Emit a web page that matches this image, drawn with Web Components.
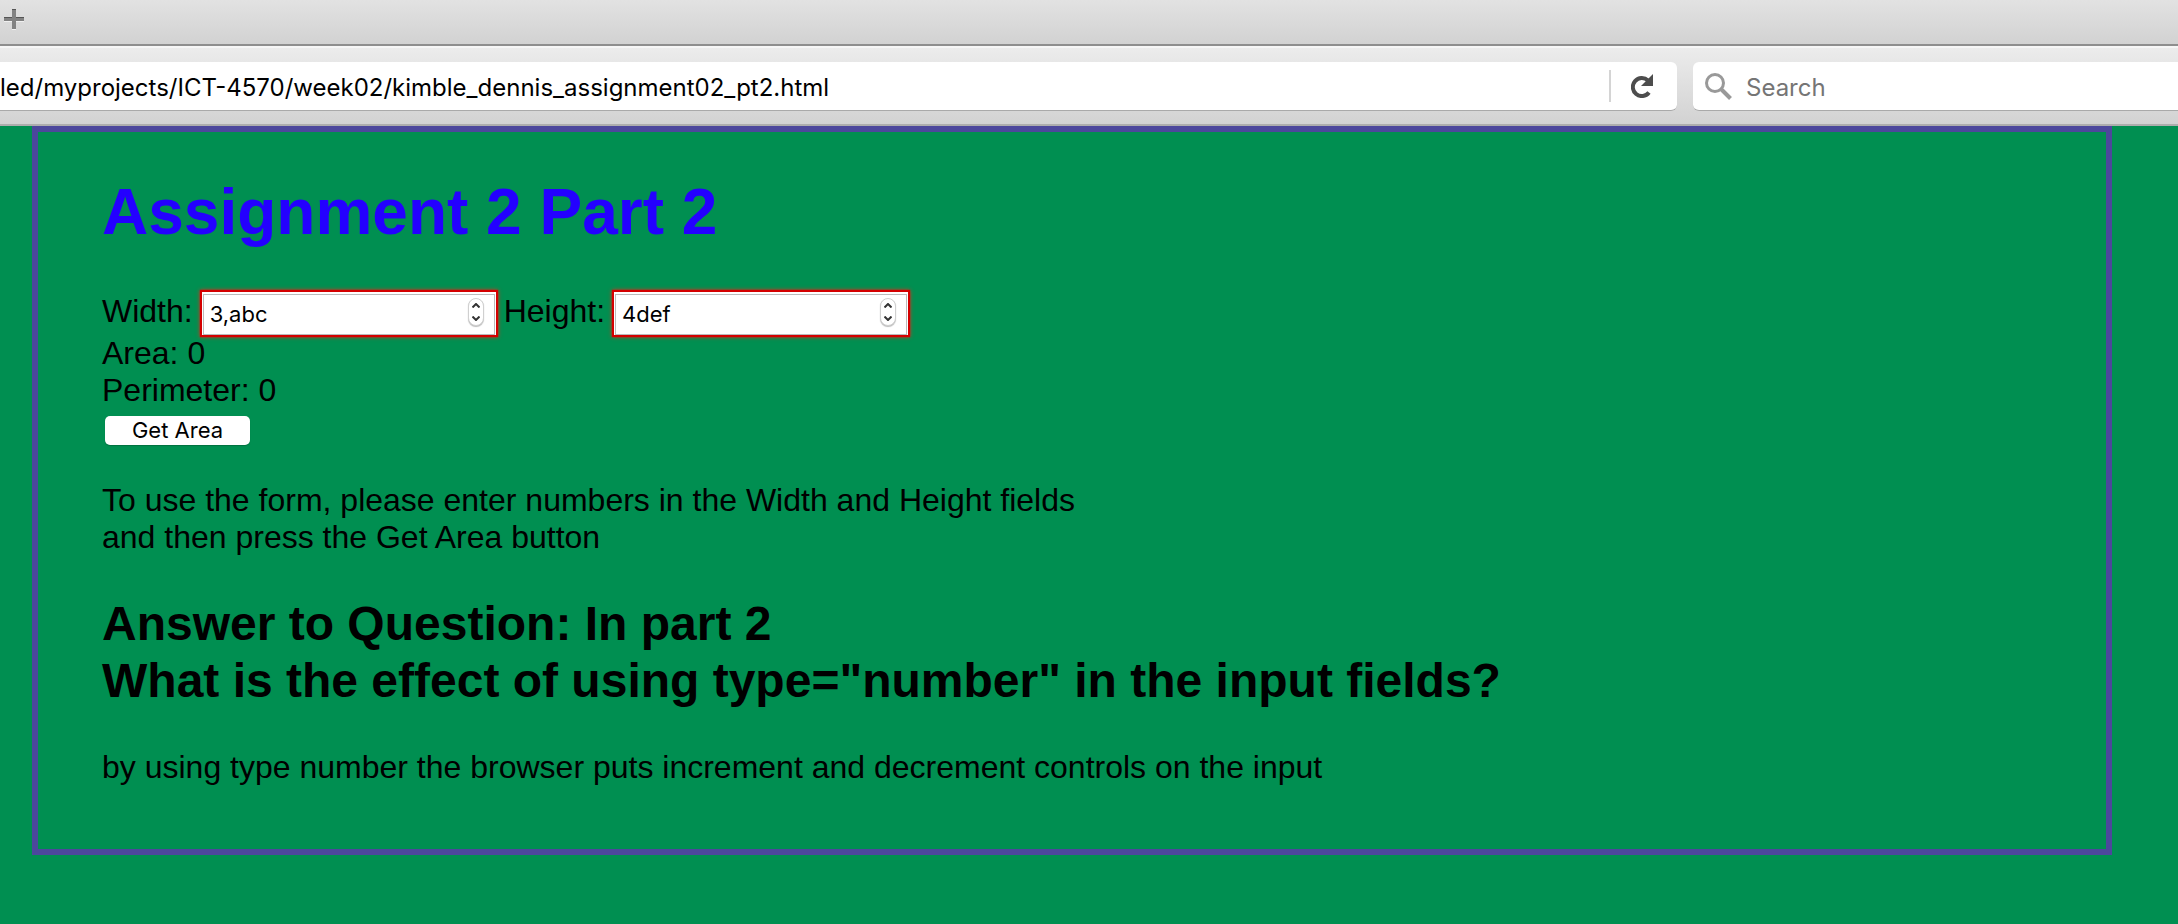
<!DOCTYPE html>
<html lang="en">
<head>
<meta charset="utf-8">
<title>Assignment 2 Part 2</title>
<style>
html{background:#008f51}
body{margin:0;font-family:"Liberation Sans",Arial,sans-serif;font-size:32px;line-height:37px;color:#000}
</style>
</head>
<body>
<browser-chrome></browser-chrome>
<main>
<assignment-panel>
  <span slot="title">Assignment 2 Part 2</span>
  <area-form></area-form>
  <qa-block>
    <span slot="question">Answer to Question: In part 2<br>What is the effect of using type="number" in the input fields?</span>
    <span slot="answer">by using type number the browser puts increment and decrement controls on the input</span>
  </qa-block>
</assignment-panel>
</main>
<script>
const define = (name, html, setup) => customElements.define(name, class extends HTMLElement {
  constructor() {
    super();
    this.attachShadow({ mode: 'open' });
  }
  connectedCallback() {
    this.shadowRoot.innerHTML = html;
    if (setup) setup(this, this.shadowRoot);
  }
});

define('tab-strip', `
<style>
:host{display:flex;align-items:flex-start;height:35px;padding:9px 4px 0;background:linear-gradient(#e2e2e2,#d2d2d2);border-bottom:2px solid #8e8e8e}
button{border:0;background:none;padding:0;width:20px;height:20px}
svg{display:block}
</style>
<button aria-label="New tab"><svg width="20" height="21" viewBox="0 0 20 21">
<path d="M8 1h4v8h8v4h-8v8H8v-8H0V9h8z" fill="#f0f0f0"/>
<path d="M8 0h4v8h8v4h-8v8H8v-8H0V8h8z" fill="#828282"/>
<path d="M8 0h4v1H8zM0 8h8v1H0zM12 8h8v1h-8z" fill="#555"/></svg></button>`);

define('address-bar', `
<style>
:host{display:flex;align-items:center;box-sizing:border-box;height:49px;background:#fff;border-bottom:1px solid #a9a9a9;border-radius:0 6px 6px 0}
input{flex:1;min-width:0;border:0;outline:0;background:none;padding:3px 0 0;font:24px/30px Inter,sans-serif;color:#000}
button{border:0;border-left:2px solid #d4d4d4;background:none;padding:0 24px 0 20px;height:32px;display:flex;align-items:center}
</style>
<input type="text" aria-label="Address" value="led/myprojects/ICT-4570/week02/kimble_dennis_assignment02_pt2.html">
<button aria-label="Reload"><svg width="22" height="24" viewBox="0 0 22 24">
<path d="M18 18.500A9 9 0 1 1 17 6.500" fill="none" stroke="#4d4d4d" stroke-width="4"/>
<path d="M22 0v12H10z" fill="#4d4d4d"/></svg></button>`);

define('search-box', `
<style>
:host{display:flex;align-items:center;gap:14px;box-sizing:border-box;height:49px;padding-left:12px;background:#fff;border-bottom:1px solid #a9a9a9;border-radius:6px 0 0 6px}
svg{flex:none}
input{flex:1;min-width:0;border:0;outline:0;background:none;padding:3px 0 0;font:24px/30px Inter,sans-serif;color:#000}
input::placeholder{color:#757575;opacity:1}
</style>
<svg width="27" height="27" viewBox="0 0 27 27" fill="none" stroke="#999">
<circle cx="10" cy="10" r="8.500" stroke-width="3"/><path d="M15.500 15.500l10 10" stroke-width="4"/></svg>
<input type="text" aria-label="Search" placeholder="Search">`);

define('browser-chrome', `
<style>
:host{display:block}
.bar{display:grid;grid-template-columns:1677fr 485fr;gap:16px;padding:14px 0 13px;background:linear-gradient(#ececec,#d2d2d2);border-top:2px solid #f6f6f6;border-bottom:2px solid #adadad}
</style>
<tab-strip></tab-strip>
<div class="bar"><address-bar></address-bar><search-box></search-box></div>`);

define('assignment-panel', `
<style>
:host{display:block;margin:0 66px 0 32px;padding:43px 64px 63px;border:6px solid #4c479c}
h1{margin:0 0 41px;font-size:64px;line-height:74px;color:#2400ff}
</style>
<h1><slot name="title"></slot></h1><slot></slot>`);

define('number-field', `
<style>
:host{display:flex;align-items:center;gap:9px}
label{padding-bottom:5px}
.box{position:relative;box-sizing:border-box;width:294px;height:43px;padding:1px;background:#fff;box-shadow:0 0 1px 2px #d40000,0 0 4px 2px #e03020}
input{box-sizing:border-box;width:100%;height:41px;border:1px solid #bbb;outline:0;background:#fff;padding:0 32px 0 6px;font:22px/26px Inter,sans-serif;color:#000}
.steps{position:absolute;top:6px;right:12px;width:16px;height:28px;box-sizing:border-box;display:flex;flex-direction:column;border:1px solid #d0d0d0;border-radius:8px;box-shadow:0 1px 1px #bbb;background:#fff}
button{flex:1;border:0;padding:0;background:none;display:flex;align-items:center;justify-content:center}
</style>
<label for="n"></label>
<div class="box"><input id="n" type="text" inputmode="decimal" aria-invalid="true">
<div class="steps">
<button type="button" aria-label="Increase"><svg width="8" height="5" viewBox="0 0 8 5"><path d="M.5 4.500l3.500-3.500 3.500 3.500" fill="none" stroke="#333" stroke-width="2"/></svg></button>
<button type="button" aria-label="Decrease"><svg width="8" height="5" viewBox="0 0 8 5"><path d="M.5 .5l3.500 3.500 3.500-3.500" fill="none" stroke="#333" stroke-width="2"/></svg></button>
</div></div>`, (el, root) => {
  root.querySelector('label').textContent = el.getAttribute('label');
  const input = root.querySelector('input');
  input.value = el.getAttribute('value');
  const step = d => { input.value = (parseFloat(input.value) || 0) + d; };
  const [up, down] = root.querySelectorAll('button');
  up.onclick = () => step(1);
  down.onclick = () => step(-1);
});

define('area-form', `
<style>
:host{display:block}
.fields{display:flex;gap:8px;padding:2px 0 0}
.submit{display:block;margin:7px 0 37px 3px;border:0;border-radius:5px;box-shadow:0 1px 1px #007040;background:#fff;width:145px;height:29px;padding:0 0 2px;font:22px/26px Inter,sans-serif;color:#000}
p,output{margin:0}
</style>
<form onsubmit="return false">
<div class="fields"><number-field label="Width:" value="3,abc"></number-field><number-field label="Height:" value="4def"></number-field></div>
<div>Area: <output class="area">0</output></div>
<div>Perimeter: <output class="perimeter">0</output></div>
<button class="submit">Get Area</button>
</form>
<p>To use the form, please enter numbers in the Width and Height fields<br>and then press the Get Area button</p>`, (el, root) => {
  root.querySelector('.submit').onclick = () => {
    const [w, h] = [...root.querySelectorAll('number-field')].map(f => Number(f.shadowRoot.querySelector('input').value) || 0);
    root.querySelector('.area').value = w * h;
    root.querySelector('.perimeter').value = 2 * (w + h);
  };
});

define('qa-block', `
<style>
:host{display:block}
h2{margin:39px 0 40px;font-size:48px;line-height:57px}
p{margin:0}
</style>
<h2><slot name="question"></slot></h2>
<p><slot name="answer"></slot></p>`);
</script>
</body>
</html>
